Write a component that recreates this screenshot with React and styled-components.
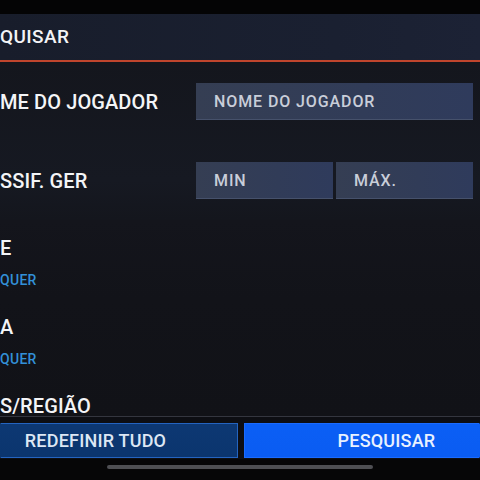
import styled, { createGlobalStyle } from "styled-components";

const GlobalStyle = createGlobalStyle`
  html, body {
    margin: 0;
    padding: 0;
    background: #000;
  }
  * {
    box-sizing: border-box;
  }
`;

const App = () => {
  return (
    <>
      <GlobalStyle />
      <Frame>
        <StatusStrip />
        <Header>
          <Title>QUISAR</Title>
        </Header>

        <Body>
          <InputSection>
            <FieldRow>
              <Label>ME DO JOGADOR</Label>
              <Inputs>
                <Field>NOME DO JOGADOR</Field>
              </Inputs>
            </FieldRow>
            <FieldRow>
              <Label>SSIF. GER</Label>
              <Inputs $split>
                <Field>MIN</Field>
                <Field>MÁX.</Field>
              </Inputs>
            </FieldRow>
          </InputSection>

          <FilterSection>
            {filters.map((f) => (
              <Filter key={f.label}>
                <Label>{f.label}</Label>
                {f.value && <SubLabel>{f.value}</SubLabel>}
              </Filter>
            ))}
          </FilterSection>
        </Body>

        <Footer>
          <Button>REDEFINIR TUDO</Button>
          <Button $primary>PESQUISAR</Button>
        </Footer>

        <NavBar>
          <HomeIndicator />
        </NavBar>
      </Frame>
    </>
  );
};

export default App;

const filters = [
  { label: "E", value: "QUER" },
  { label: "A", value: "QUER" },
  { label: "S/REGIÃO", value: null },
];

// Styled Components

const Frame = styled.div`
  width: 480px;
  height: 480px;
  overflow: hidden;
  display: flex;
  flex-direction: column;
  background: #0c0d11;
  font-family: Roboto, "Liberation Sans", sans-serif;
  font-weight: 500;
`;

const StatusStrip = styled.div`
  height: 14px;
  flex: none;
  background: #040405;
`;

const Header = styled.div`
  height: 48px;
  flex: none;
  display: flex;
  align-items: center;
  padding-bottom: 1px;
  background: linear-gradient(90deg, #181d2b 0%, #1a2031 70%, #1c2235 100%);
  border-bottom: 2px solid #c0452d;
`;

const Title = styled.div`
  color: #f3f4f6;
  font-size: 19px;
  line-height: 24px;
  letter-spacing: 0.4px;
`;

const Body = styled.div`
  flex: 1;
  min-height: 0;
  display: flex;
  flex-direction: column;
`;

const InputSection = styled.div`
  display: flex;
  flex-direction: column;
  gap: 42px;
  padding: 21px 7px 21px 0;
  background: linear-gradient(180deg, #14161d 0%, #161922 75%, #14161d 100%);
`;

const FieldRow = styled.div`
  display: grid;
  grid-template-columns: 196px 1fr;
  align-items: center;
  height: 37px;
`;

const Label = styled.div`
  color: #f4f5f7;
  font-size: 20px;
  line-height: 20px;
  letter-spacing: 0.1px;
  white-space: nowrap;
`;

const Inputs = styled.div`
  display: grid;
  grid-template-columns: ${({ $split }) => ($split ? "1fr 1fr" : "1fr")};
  gap: 3px;
  height: 100%;
`;

const Field = styled.div`
  display: flex;
  align-items: center;
  padding-left: 18px;
  color: #c9ced9;
  font-size: 16px;
  letter-spacing: 0.9px;
  background: linear-gradient(90deg, #353e53 0%, #313c58 60%, #2f3b5c 100%);
  border-bottom: 1px solid #46516b;
`;

const FilterSection = styled.div`
  flex: 1;
  display: flex;
  flex-direction: column;
  gap: 28px;
  padding-top: 18px;
  background: linear-gradient(180deg, #14151c 0%, #121319 40%, #111217 100%);
`;

const Filter = styled.div`
  display: flex;
  flex-direction: column;
  gap: 13px;
  flex: none;
`;

const SubLabel = styled.div`
  color: #3290d8;
  font-size: 14px;
  line-height: 18px;
  letter-spacing: 0.3px;
`;

const Footer = styled.div`
  flex: none;
  height: 43px;
  display: grid;
  grid-template-columns: 238px 1fr;
  gap: 6px;
  padding-top: 6px;
  padding-bottom: 1px;
  background: #0d0e13;
  border-top: 1px solid #34363f;
`;

const Button = styled.div`
  display: flex;
  align-items: center;
  justify-content: center;
  padding: ${({ $primary }) => ($primary ? "0 0 0 49px" : "0 47px 0 0")};
  font-size: 18px;
  letter-spacing: 0.2px;
  white-space: nowrap;
  color: ${({ $primary }) => ($primary ? "#e8f1ff" : "#dde7f4")};
  background: ${({ $primary }) =>
    $primary
      ? "linear-gradient(180deg, #0b5ff5 0%, #0a5cf2 100%)"
      : "linear-gradient(180deg, #0d3873 0%, #0b356e 100%)"};
  border: 1px solid ${({ $primary }) => ($primary ? "#1a6cff" : "#2464c0")};
  border-left-color: ${({ $primary }) => ($primary ? "#1a6cff" : "transparent")};
  border-right-color: ${({ $primary }) => ($primary ? "transparent" : "#2464c0")};
`;

const NavBar = styled.div`
  flex: none;
  height: 21px;
  display: flex;
  justify-content: center;
  padding-top: 6px;
  background: #060607;
`;

const HomeIndicator = styled.div`
  width: 266px;
  height: 4px;
  border-radius: 2px;
  background: #4e4f53;
`;
